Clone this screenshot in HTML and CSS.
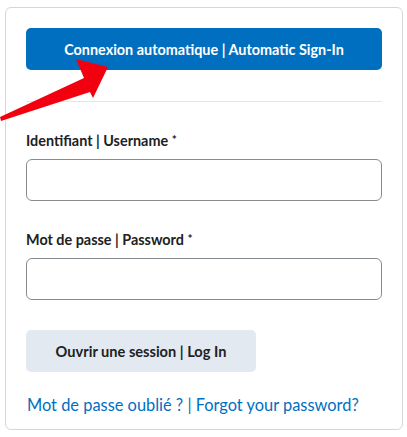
FILE: index.html
```html
<!DOCTYPE html>
<html lang="fr">
<head>
<meta charset="utf-8">
<title>Connexion</title>
<link rel="stylesheet" href="styles.css">
</head>
<body>
<div class="card">
  <button class="btn-primary" type="button">Connexion automatique | Automatic Sign-In</button>
  <hr class="sep">
  <label class="label" for="user">Identifiant | Username <span class="req">*</span></label>
  <input class="field" id="user" type="text">
  <label class="label" for="pass">Mot de passe | Password <span class="req">*</span></label>
  <input class="field" id="pass" type="password">
  <button class="btn-secondary" type="button">Ouvrir une session | Log In</button>
  <a class="link" href="#">Mot de passe oublié ? | Forgot your password?</a>
</div>
<svg class="arrow" width="120" height="130" viewBox="0 0 120 130" aria-hidden="true">
  <polygon points="0,117 84,78 76,59 108,67 93,98 90,92 1,121" fill="#f2000f"/>
</svg>
</body>
</html>
```
FILE: styles.css
```css
html, body {
  margin: 0;
  padding: 0;
  background: #ffffff;
}
body {
  font-family: Lato, "Noto Sans", sans-serif;
  color: #202122;
  position: relative;
  width: 407px;
  height: 437px;
  overflow: hidden;
}
.card {
  box-sizing: border-box;
  margin: 7px 0 0 5px;
  width: 398px;
  height: 423px;
  border: 1px solid #d6d6d6;
  border-radius: 6px;
  padding: 20px 20px 0 20px;
  display: flex;
  flex-direction: column;
  align-items: flex-start;
}
.btn-primary {
  width: 100%;
  height: 42px;
  border: 0;
  border-radius: 5px;
  background: #006fbf;
  color: #ffffff;
  font-family: inherit;
  font-weight: 700;
  font-size: 14.4px;
  padding: 0;
}
.sep {
  width: 100%;
  margin: 31px 0 0 0;
  border: 0;
  border-top: 1px solid #e6e6e6;
  height: 0;
}
.label {
  display: block;
  margin-top: 29px;
  font-size: 14.4px;
  line-height: 20px;
  font-weight: 700;
  color: #202122;
}
.req {
  font-size: 12px;
  line-height: 0;
  vertical-align: 2px;
}
.field {
  box-sizing: border-box;
  width: 100%;
  height: 42px;
  margin-top: 8px;
  border: 1px solid #868c8f;
  border-radius: 6px;
  background: #ffffff;
  padding: 0 12px;
  font-family: inherit;
  font-size: 16px;
}
.btn-secondary {
  margin-top: 30px;
  width: 230px;
  height: 42px;
  border: 0;
  border-radius: 5px;
  background: #e3e9f1;
  color: #202122;
  font-family: inherit;
  font-weight: 700;
  font-size: 14.6px;
  padding: 0;
}
.link {
  display: block;
  margin-top: 21px;
  margin-left: 1px;
  font-size: 16.4px;
  line-height: 24px;
  color: #006fbf;
  text-decoration: none;
}
.arrow {
  position: absolute;
  left: 0;
  top: 0;
}
```
